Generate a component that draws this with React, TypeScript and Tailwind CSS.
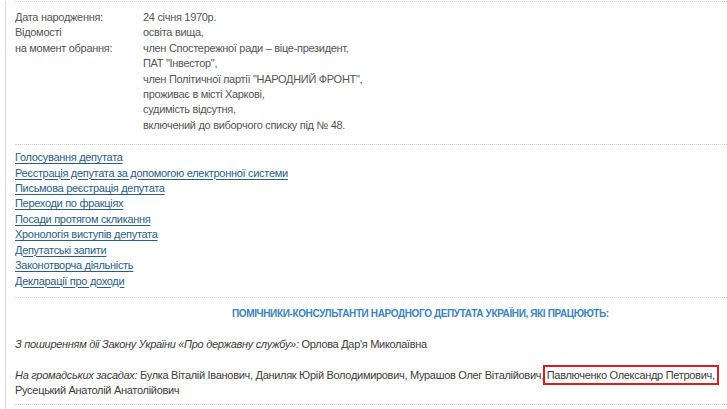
import React from "react";

const links = [
  "Голосування депутата",
  "Реєстрація депутата за допомогою електронної системи",
  "Письмова реєстрація депутата",
  "Переходи по фракціях",
  "Посади протягом скликання",
  "Хронологія виступів депутата",
  "Депутатські запити",
  "Законотворча діяльність",
  "Декларації про доходи",
];

const values = [
  "24 січня 1970р.",
  "освіта вища,",
  "член Спостережної ради – віце-президент,",
  "ПАТ \"Інвестор\",",
  "член Політичної партії \"НАРОДНИЙ ФРОНТ\",",
  "проживає в місті Харкові,",
  "судимість відсутня,",
  "включений до виборчого списку під № 48.",
];

export default function App() {
  return (
    <div className="w-[727px] h-[409px] overflow-hidden bg-white font-['Liberation_Sans',Arial,sans-serif] text-[11px] tracking-[-0.3px] leading-[15.4px] text-[#555]">
      <div className="ml-[5px] h-full border-l border-[#dcdcdc] pl-[9px]">
        <div className="border-t border-dotted border-[#d5d5d5] mt-[1px]" />
        <div className="flex pt-[8px] pb-[11px]">
          <div className="w-[128px] shrink-0">
            <div>Дата народження:</div>
            <div>Відомості</div>
            <div>на момент обрання:</div>
          </div>
          <div>
            {values.map((v) => (
              <div key={v}>{v}</div>
            ))}
          </div>
        </div>
        <div className="border-t border-dotted border-[#d5d5d5]" />
        <div className="flex flex-col pt-[5px] pb-[8px]">
          {links.map((l) => (
            <a
              key={l}
              href="#"
              className="self-start text-[#2b5d86] underline underline-offset-[2px] decoration-[#2b5d86]"
            >
              {l}
            </a>
          ))}
        </div>
        <div className="border-t border-dotted border-[#d5d5d5]" />
        <div className="pl-[217px] pt-[8px] font-bold text-[10px] text-[#3b84be] tracking-[-0.37px]">
          ПОМІЧНИКИ-КОНСУЛЬТАНТИ НАРОДНОГО ДЕПУТАТА УКРАЇНИ, ЯКІ ПРАЦЮЮТЬ:
        </div>
        <div className="pt-[16px] text-[#3c3c3c]">
          <span className="italic">З поширенням дії Закону України «Про державну службу»:</span>{" "}
          Орлова Дар'я Миколаївна
        </div>
        <div className="pt-[15px] text-[#3c3c3c] whitespace-nowrap">
          <span className="italic">На громадських засадах:</span> Булка Віталій Іванович, Даниляк Юрій
          Володимирович, Мурашов Олег Віталійович,{" "}
          <span className="outline outline-2 outline-[#d0202a] outline-offset-[2px]">
            Павлюченко Олександр Петрович,
          </span>
          <br />
          Русецький Анатолій Анатолійович
        </div>
        <div className="mt-[5px] border-t border-dotted border-[#d5d5d5]" />
      </div>
    </div>
  );
}
